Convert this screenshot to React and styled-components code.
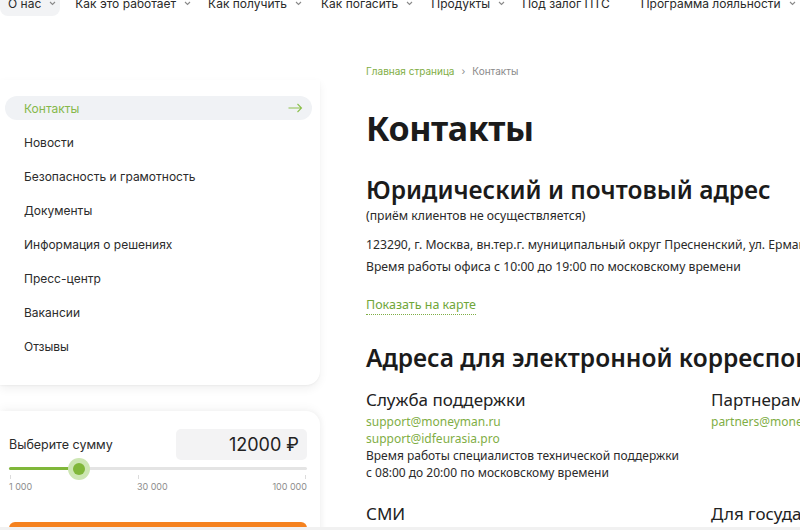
import React from "react";
import styled, { createGlobalStyle } from "styled-components";

const Global = createGlobalStyle`
  html, body { margin: 0; padding: 0; background: #fff; }
  body { width: 800px; height: 530px; overflow: hidden; font-family: "Noto Sans", Inter, sans-serif; color: #1f1f1f; }
  * { box-sizing: border-box; }
`;

const Page = styled.div`
  position: relative;
  width: 800px;
  height: 530px;
  overflow: hidden;
`;

const Nav = styled.nav`
  display: flex;
  align-items: center;
  height: 26px;
  margin-top: -10px;
  font-family: Inter, sans-serif;
  font-size: 12px;
  color: #2a2a2a;
  white-space: nowrap;
`;

const NavItem = styled.div`
  flex-shrink: 0;
  display: flex;
  align-items: center;
  height: 100%;
  gap: 8px;
  padding: ${(p) => (p.$active ? "0 4px 0 8px" : "0")};
  margin-right: ${(p) => p.$mr}px;
  background: ${(p) => (p.$active ? "#f2f3f5" : "transparent")};
  border-radius: 0 0 8px 8px;
`;

const Chev = () => (
  <svg width="7" height="5" viewBox="0 0 7 5" fill="none">
    <path d="M1 1l2.5 2.5L6 1" stroke="#8a8a8a" strokeWidth="1.1" />
  </svg>
);

const Main = styled.div`
  display: grid;
  grid-template-columns: 320px 1fr;
  column-gap: 46px;
`;

const Side = styled.aside`
  display: flex;
  flex-direction: column;
  padding-top: 64px;
`;

const MenuCard = styled.div`
  background: #fff;
  border-radius: 0 0 14px 0;
  box-shadow: 0 4px 10px rgba(0, 0, 0, 0.06), 0 1px 2px rgba(0, 0, 0, 0.04);
  padding: 16px 8px 27px 5px;
  display: flex;
  flex-direction: column;
  gap: 10px;
`;

const MenuItem = styled.div`
  display: flex;
  align-items: center;
  justify-content: space-between;
  height: 24px;
  padding: 0 9px 0 19px;
  border-radius: 12px;
  font-family: Inter, sans-serif;
  font-size: 12px;
  color: ${(p) => (p.$active ? "#86b84a" : "#2b2b2b")};
  background: ${(p) => (p.$active ? "#f0f2f5" : "transparent")};
`;

const Arrow = () => (
  <svg width="15" height="10" viewBox="0 0 15 10" fill="none">
    <path d="M0.5 5h13M9.5 1l4 4-4 4" stroke="#8cc04c" strokeWidth="1.1" />
  </svg>
);

const CalcCard = styled.div`
  margin-top: 26px;
  background: #fff;
  border-radius: 0 14px 0 0;
  box-shadow: 0 -3px 10px rgba(0, 0, 0, 0.04), 2px 0 4px rgba(0, 0, 0, 0.03);
  padding: 18px 13px 0 9px;
  height: 130px;
`;

const CalcTop = styled.div`
  display: flex;
  align-items: center;
  justify-content: space-between;
`;

const CalcLabel = styled.span`
  font-family: Inter, sans-serif;
  font-size: 12.5px;
  color: #2b2b2b;
`;

const Amount = styled.div`
  width: 131px;
  height: 31px;
  background: #f3f3f4;
  border-radius: 5px;
  display: flex;
  align-items: center;
  justify-content: flex-end;
  padding-right: 8px;
  font-family: Inter, sans-serif;
  font-size: 18px;
  color: #222;
`;

const Slider = styled.div`
  position: relative;
  height: 3px;
  margin-top: 7px;
  background: #e4e4e4;
  border-radius: 2px;
`;

const SliderFill = styled.div`
  position: absolute;
  left: 0;
  top: 0;
  height: 3px;
  background: #80b73a;
  border-radius: 2px;
`;

const Thumb = styled.div`
  position: absolute;
  top: 50%;
  width: 22px;
  height: 22px;
  margin: -11px 0 0 -11px;
  border-radius: 50%;
  background: #cde6b3;
  display: flex;
  align-items: center;
  justify-content: center;
  &::after {
    content: "";
    width: 12px;
    height: 12px;
    border-radius: 50%;
    background: #80b73a;
  }
`;

const Ticks = styled.div`
  display: flex;
  justify-content: space-between;
  margin-top: 5px;
  font-family: Inter, sans-serif;
  font-size: 9px;
  color: #8d8d8d;
`;

const Tick = styled.span`
  position: relative;
  padding-top: 6px;
  &::before {
    content: "";
    position: absolute;
    top: 0;
    left: ${(p) => (p.$right ? "auto" : "1px")};
    right: ${(p) => (p.$right ? "1px" : "auto")};
    width: 1px;
    height: 4px;
    background: #dcdcdc;
  }
`;

const OrangeBtn = styled.div`
  margin-top: 30px;
  height: 40px;
  background: #f5821f;
  border-radius: 6px;
`;

const Content = styled.section`
  padding-top: 48px;
  white-space: nowrap;
`;

const Crumbs = styled.div`
  display: flex;
  align-items: center;
  gap: 7px;
  font-family: Inter, sans-serif;
  font-size: 10px;
  line-height: 14px;
  color: #8a8a8a;
`;

const CrumbLink = styled.span`
  color: #7fae45;
`;

const H1 = styled.h1`
  margin: 28px 0 0;
  font-family: "Noto Sans", sans-serif;
  font-weight: 700;
  font-size: 34px;
  line-height: 44px;
  letter-spacing: -0.4px;
  color: #1b1b1b;
`;

const H2 = styled.h2`
  margin: ${(p) => p.$mt}px 0 0;
  font-family: "Noto Sans", sans-serif;
  font-weight: 600;
  font-size: 24.5px;
  line-height: 30px;
  color: #1b1b1b;
`;

const Text = styled.p`
  margin: ${(p) => p.$mt || 0}px 0 0;
  font-family: "Noto Sans", sans-serif;
  font-size: 12.2px;
  line-height: ${(p) => p.$lh || 22}px;
  color: #2a2a2a;
`;

const MapLink = styled.span`
  display: inline-block;
  margin-top: 18px;
  font-family: "Noto Sans", sans-serif;
  font-size: 12.5px;
  line-height: 18px;
  color: #6fa63a;
  border-bottom: 1px dotted #7fae45;
`;

const Grid = styled.div`
  display: grid;
  grid-template-columns: 345px 1fr;
  row-gap: 20px;
  margin-top: 14px;
`;

const Block = styled.div`
  display: flex;
  flex-direction: column;
`;

const BlockTitle = styled.div`
  font-family: "Noto Sans", sans-serif;
  font-size: 17px;
  line-height: 26px;
  color: #222;
`;

const Mail = styled.div`
  font-family: "Noto Sans", sans-serif;
  font-size: 12px;
  line-height: 17px;
  color: #7fae45;
`;

const Small = styled.div`
  font-family: "Noto Sans", sans-serif;
  font-size: 12px;
  line-height: 17px;
  color: #2a2a2a;
`;

const BottomBar = styled.div`
  position: absolute;
  left: 0;
  right: 0;
  bottom: 0;
  height: 3px;
  background: #f1f1f1;
`;

const navItems = [
  ["О нас", true, 15, true],
  ["Как это работает", true, 17, false],
  ["Как получить", true, 19, false],
  ["Как погасить", true, 18, false],
  ["Продукты", true, 17, false],
  ["Под залог ПТС", false, 31, false],
  ["Программа лояльности", true, 0, false],
];

const menu = [
  "Контакты",
  "Новости",
  "Безопасность и грамотность",
  "Документы",
  "Информация о решениях",
  "Пресс-центр",
  "Вакансии",
  "Отзывы",
];

export default function App() {
  const pct = 70 / 298;
  return (
    <Page>
      <Global />
      <Nav>
        {navItems.map(([t, ch, mr, act]) => (
          <NavItem key={t} $mr={mr} $active={act}>
            {t}
            {ch && <Chev />}
          </NavItem>
        ))}
      </Nav>
      <Main>
        <Side>
          <MenuCard>
            {menu.map((m, i) => (
              <MenuItem key={m} $active={i === 0}>
                {m}
                {i === 0 && <Arrow />}
              </MenuItem>
            ))}
          </MenuCard>
          <CalcCard>
            <CalcTop>
              <CalcLabel>Выберите сумму</CalcLabel>
              <Amount>12000 ₽</Amount>
            </CalcTop>
            <Slider>
              <SliderFill style={{ width: `${pct * 100}%` }} />
              <Thumb style={{ left: `${pct * 100}%` }} />
            </Slider>
            <Ticks>
              <Tick>1 000</Tick>
              <Tick>30 000</Tick>
              <Tick $right>100 000</Tick>
            </Ticks>
            <OrangeBtn />
          </CalcCard>
        </Side>
        <Content>
          <Crumbs>
            <CrumbLink>Главная страница</CrumbLink>
            <span>›</span>
            <span>Контакты</span>
          </Crumbs>
          <H1>Контакты</H1>
          <H2 $mt={25}>Юридический и почтовый адрес</H2>
          <Text $mt={1} $lh={20}>(приём клиентов не осуществляется)</Text>
          <Text $mt={8}>
            123290, г. Москва, вн.тер.г. муниципальный округ Пресненский, ул. Ермакова Роща, д. 7А
          </Text>
          <Text>Время работы офиса с 10:00 до 19:00 по московскому времени</Text>
          <MapLink>Показать на карте</MapLink>
          <H2 $mt={28}>Адреса для электронной корреспонденции</H2>
          <Grid>
            <Block>
              <BlockTitle>Служба поддержки</BlockTitle>
              <Mail>support@moneyman.ru</Mail>
              <Mail>support@idfeurasia.pro</Mail>
              <Small>Время работы специалистов технической поддержки</Small>
              <Small>с 08:00 до 20:00 по московскому времени</Small>
            </Block>
            <Block>
              <BlockTitle>Партнерам</BlockTitle>
              <Mail>partners@moneyman.ru</Mail>
            </Block>
            <Block>
              <BlockTitle>СМИ</BlockTitle>
            </Block>
            <Block>
              <BlockTitle>Для государственных органов</BlockTitle>
            </Block>
          </Grid>
        </Content>
      </Main>
      <BottomBar />
    </Page>
  );
}
